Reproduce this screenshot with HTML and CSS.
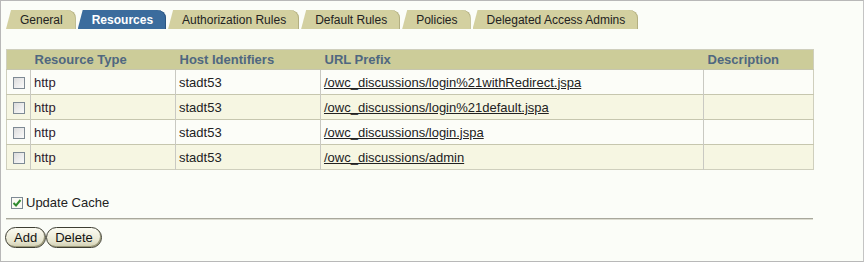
FILE: index.html
```html
<!DOCTYPE html>
<html lang="en">
<head>
    <meta charset="UTF-8">
    <title>Resources</title>
    <link rel="stylesheet" href="styles.css">
</head>
<body>
    <div class="page">
        <div class="tabs">
            <a class="tab">General</a>
            <a class="tab active">Resources</a>
            <a class="tab">Authorization Rules</a>
            <a class="tab">Default Rules</a>
            <a class="tab">Policies</a>
            <a class="tab">Delegated Access Admins</a>
        </div>

        <table class="res-table">
            <colgroup>
                <col class="c-check">
                <col class="c-type">
                <col class="c-host">
                <col class="c-url">
                <col class="c-desc">
            </colgroup>
            <thead>
                <tr>
                    <th></th>
                    <th>Resource Type</th>
                    <th>Host Identifiers</th>
                    <th>URL Prefix</th>
                    <th>Description</th>
                </tr>
            </thead>
            <tbody>
                <tr>
                    <td><span class="cb"></span></td>
                    <td class="type">http</td>
                    <td>stadt53</td>
                    <td><a class="url">/owc_discussions/login%21withRedirect.jspa</a></td>
                    <td></td>
                </tr>
                <tr>
                    <td><span class="cb"></span></td>
                    <td class="type">http</td>
                    <td>stadt53</td>
                    <td><a class="url">/owc_discussions/login%21default.jspa</a></td>
                    <td></td>
                </tr>
                <tr>
                    <td><span class="cb"></span></td>
                    <td class="type">http</td>
                    <td>stadt53</td>
                    <td><a class="url">/owc_discussions/login.jspa</a></td>
                    <td></td>
                </tr>
                <tr>
                    <td><span class="cb"></span></td>
                    <td class="type">http</td>
                    <td>stadt53</td>
                    <td><a class="url">/owc_discussions/admin</a></td>
                    <td></td>
                </tr>
            </tbody>
        </table>

        <div class="cache">
            <span class="cb checked">
                <svg width="10" height="10" viewBox="0 0 10 10"><path d="M1.5 5 L4 7.5 L8.5 2" fill="none" stroke="#2f8a2f" stroke-width="2"/></svg>
            </span>
            <span>Update Cache</span>
        </div>

        <div class="rule"></div>

        <div class="buttons">
            <button class="btn">Add</button>
            <button class="btn">Delete</button>
        </div>
    </div>
</body>
</html>
```

FILE: styles.css
```css
:root {
    --page-bg: #fbfdf8;
    --tab-bg: #d3d0a0;
    --tab-active: #3b6c9d;
    --head-bg: #cccc99;
    --head-text: #4f6780;
    --row-alt: #f6f6e2;
    --line: #c6c6ae;
}

html, body {
    margin: 0;
    padding: 0;
}

body {
    font-family: "Liberation Sans", Arial, sans-serif;
    font-size: 13px;
    color: #222;
    background: var(--page-bg);
}

.page {
    box-sizing: border-box;
    width: 864px;
    height: 262px;
    border: 1px solid #b8b8b8;
    border-right-color: #c4c4c4;
    padding: 9px 0 0 5px;
    background: var(--page-bg);
}

/* tabs */
.tabs {
    display: flex;
    gap: 2px;
    height: 19px;
}

.tab {
    display: flex;
    align-items: center;
    height: 19px;
    padding: 1px 13px 0 14px;
    box-sizing: border-box;
    font-size: 12px;
    color: #222;
    background: var(--tab-bg);
    border-top-right-radius: 9px 8px;
    clip-path: polygon(5px 0, 100% 0, 100% 100%, 0 100%);
    box-shadow: inset -1px 0 0 #b3af82;
}

.tab.active {
    background: var(--tab-active);
    color: #fff;
    font-weight: bold;
    box-shadow: inset -1px 0 0 #2b5580;
}

/* table */
.res-table {
    margin-top: 20px;
    width: 807px;
    table-layout: fixed;
    border-collapse: collapse;
    border: 1px solid #cfcfbd;
}

.c-check { width: 24px; }
.c-type { width: 145px; }
.c-host { width: 145px; }
.c-url { width: 383px; }
.c-desc { width: 110px; }

.res-table th {
    height: 19px;
    padding: 0 4px;
    background: var(--head-bg);
    color: var(--head-text);
    font-weight: bold;
    font-size: 13px;
    text-align: left;
}

.res-table td {
    height: 24px;
    padding: 0 3px;
    border-top: 1px solid var(--line);
    border-left: 1px solid #c9c9c2;
    background: #fcfdf8;
}

.res-table td:first-child {
    border-left: none;
    padding: 0 0 0 6px;
}

.res-table tbody tr:nth-child(even) td {
    background: var(--row-alt);
}

.type {
    color: #2e1a2e;
}

.url {
    color: #222;
    text-decoration: underline;
}

.cb {
    display: inline-flex;
    align-items: center;
    justify-content: center;
    box-sizing: border-box;
    width: 12px;
    height: 12px;
    border: 1px solid #7e8a94;
    background: linear-gradient(135deg, #dcdcdc, #fbfbfb);
    vertical-align: middle;
}

/* footer part */
.cache {
    display: flex;
    align-items: center;
    gap: 3px;
    margin: 25px 0 0 5px;
    font-size: 13px;
}

.cb.checked {
    width: 12px;
    height: 12px;
    background: #fafaf4;
}

.rule {
    width: 807px;
    margin-top: 8px;
    border-top: 1px solid #a8a89c;
    border-bottom: 1px solid #dcdcd0;
}

.buttons {
    display: flex;
    margin: 7px 0 0 -1px;
}

.btn {
    height: 21px;
    padding: 0 8px;
    font-family: "Liberation Sans", Arial, sans-serif;
    font-size: 13px;
    color: #111;
    border: 1px solid #3e3e32;
    border-radius: 11px;
    background: linear-gradient(#fbfbf2, #e7e6d0 70%, #cfcdb0);
    box-shadow: inset -1px -1px 0 #9c9a7a;
}
```
